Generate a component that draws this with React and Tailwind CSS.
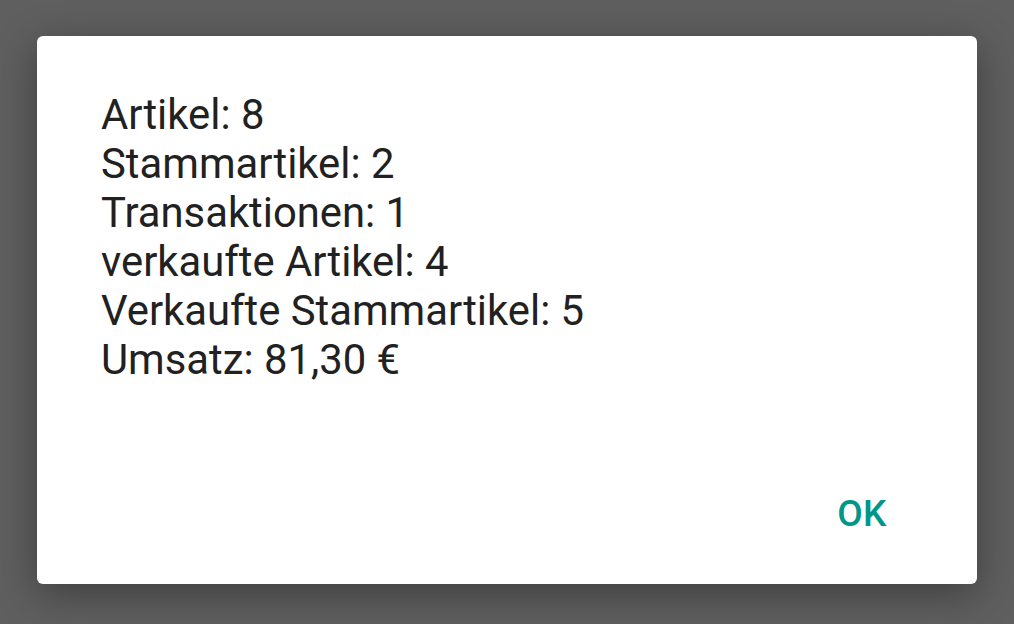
export default function App() {
  const lines = [
    "Artikel: 8",
    "Stammartikel: 2",
    "Transaktionen: 1",
    "verkaufte Artikel: 4",
    "Verkaufte Stammartikel: 5",
    "Umsatz: 81,30 €",
  ];
  return (
    <div className="w-[1014px] h-[624px] bg-[#5f5f5f] pt-[36px] pl-[37px] overflow-hidden" style={{ fontFamily: "Roboto, sans-serif" }}>
      <div className="w-[940px] h-[548px] bg-white rounded-[6px] shadow-[0_10px_40px_rgba(0,0,0,0.35)] flex flex-col">
        <div className="pt-[54px] pl-[64px] text-[41.8px] leading-[49px] text-[#212121]">
          {lines.map((l) => (
            <div key={l}>{l}</div>
          ))}
        </div>
        <div className="flex-1" />
        <div className="flex justify-end pr-[90px] pb-[48px]">
          <span className="text-[37px] font-medium text-[#009688] tracking-[0.5px] leading-[44px]">OK</span>
        </div>
      </div>
    </div>
  );
}
